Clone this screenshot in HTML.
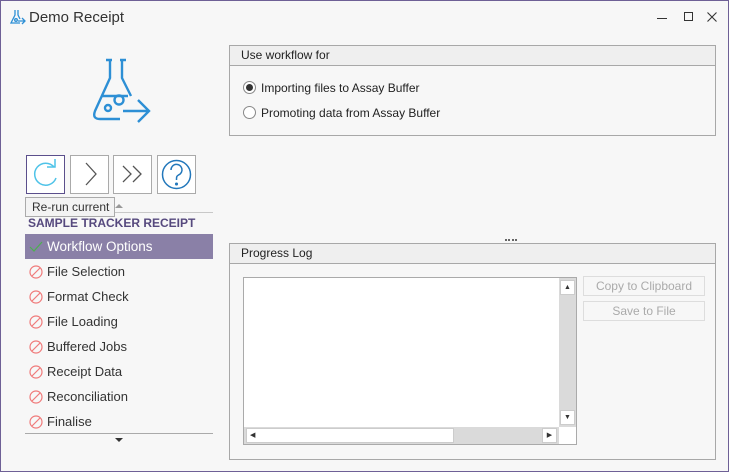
<!DOCTYPE html>
<html><head><style>
*{margin:0;padding:0;box-sizing:border-box}
body{width:729px;height:472px;overflow:hidden;background:#f7f7f7;font-family:"Liberation Sans",sans-serif;color:#333;position:relative}
.win{position:absolute;left:0;top:0;width:729px;height:472px;border:1px solid #6e6096}
.a{position:absolute}
.btn{position:absolute;top:155px;width:39px;height:39px;border:1px solid #aaa;background:#fff}
.item{position:absolute;left:25px;width:188px;height:25px;font-size:13px;line-height:25px;padding-left:22px;color:#333}
.item svg{position:absolute;left:4px;top:6px}
.grp{position:absolute;left:229px;width:487px;border:1px solid #a8a8a8;background:#f7f7f7}
.gh{height:20px;background:#efefef;border-bottom:1px solid #a8a8a8;font-size:12px;line-height:19px;padding-left:11px;color:#222}
.rad{position:absolute;left:13px;font-size:12px;color:#222}
.rad i{display:inline-block;width:13px;height:13px;border:1px solid #888;border-radius:50%;background:#fff;vertical-align:-2px;margin-right:5px;position:relative}
.gb{position:absolute;left:353px;width:122px;height:20px;border:1px solid #ddd;font-size:12px;color:#aaa;text-align:center;line-height:18px}
.sb{font-size:7px;text-align:center;line-height:13px;color:#333}
</style></head><body><div class="win"></div>
<svg class="a" style="left:9px;top:9px" width="17" height="17" viewBox="0 0 17 17" fill="none" stroke="#2d8fd5" stroke-width="1.3"><path d="M6 1v5L2 14h9M9 1v5l2 4"/><path d="M9 12h7M13 9l3 3-3 3"/><circle cx="7" cy="11" r="1.3"/></svg>
<div class="a" style="left:29px;top:9px;font-size:15px;color:#333">Demo Receipt</div>
<div class="a" style="left:657px;top:18px;width:10px;height:1px;background:#333"></div>
<div class="a" style="left:684px;top:12px;width:9px;height:9px;border:1px solid #333"></div>
<svg class="a" style="left:707px;top:12px" width="10" height="10" viewBox="0 0 10 10" stroke="#333" stroke-width="1.1"><path d="M0.5 0.5l9 9M9.5 0.5l-9 9"/></svg>
<svg class="a" style="left:90px;top:58px" width="64" height="66" viewBox="0 0 64 66" fill="none" stroke="#2d8fd5" stroke-width="2.4"><path d="M16 2h6M30 2h6"/><path d="M20 2v18L5 53q-3 8 5 8h20M32 2v18l9 18"/><path d="M12 38h26"/><circle cx="18" cy="50" r="3"/><circle cx="29" cy="42" r="4.5"/><path d="M33 53h26M48 42l11 11-11 11"/></svg>
<div class="btn" style="left:26px;border-color:#5b4f8c"><svg width="37" height="37" viewBox="0 0 37 37" fill="none" stroke="#4fc3e8" stroke-width="1.5"><path d="M27 11A11 11 0 1 0 29 22"/><path d="M20 11h8V3"/></svg></div>
<div class="btn" style="left:70px"><svg width="37" height="37" viewBox="0 0 37 37" fill="none" stroke="#555" stroke-width="1.3"><path d="M15 7l10 11-10 11"/></svg></div>
<div class="btn" style="left:113px"><svg width="37" height="37" viewBox="0 0 37 37" fill="none" stroke="#555" stroke-width="1.3"><path d="M9 10l8 8-8 8M19 10l8 8-8 8"/></svg></div>
<div class="btn" style="left:157px"><svg width="37" height="37" viewBox="0 0 37 37" fill="none" stroke="#2277bb" stroke-width="1.5"><circle cx="18.5" cy="18.5" r="14"/><path d="M13 14a5.5 5.5 0 1 1 7.5 5c-2 1-2 2-2 5"/><circle cx="18.5" cy="28" r=".8" fill="#2277bb"/></svg></div>
<div class="a" style="left:25px;top:212px;width:188px;height:1px;background:#c8c8c8"></div>
<div class="a" style="left:115px;top:200px;width:0;height:0;border:4px solid transparent;border-bottom-color:#999"></div>
<div class="a" style="left:25px;top:197px;width:90px;height:20px;background:#f3f3f3;border:1px solid #aaa;font-size:12px;line-height:18px;padding-left:6px;color:#333">Re-run current</div>
<div class="a" style="left:28px;top:216px;font-size:12px;font-weight:bold;color:#56497e">SAMPLE TRACKER RECEIPT</div>
<div class="item" style="top:234px;background:#8a80a7;color:#fff;font-size:13.5px"><svg width="14" height="14" viewBox="0 0 14 14" fill="none" stroke="#4caf50" stroke-width="1.2"><path d="M1 7l4 4 8-9"/></svg>Workflow Options</div>
<div class="item" style="top:259px"><svg width="14" height="14" viewBox="0 0 14 14" fill="none" stroke="#f07a7a" stroke-width="1.2"><circle cx="7" cy="7" r="6"/><path d="M3 11l8-8"/></svg>File Selection</div>
<div class="item" style="top:284px"><svg width="14" height="14" viewBox="0 0 14 14" fill="none" stroke="#f07a7a" stroke-width="1.2"><circle cx="7" cy="7" r="6"/><path d="M3 11l8-8"/></svg>Format Check</div>
<div class="item" style="top:309px"><svg width="14" height="14" viewBox="0 0 14 14" fill="none" stroke="#f07a7a" stroke-width="1.2"><circle cx="7" cy="7" r="6"/><path d="M3 11l8-8"/></svg>File Loading</div>
<div class="item" style="top:334px"><svg width="14" height="14" viewBox="0 0 14 14" fill="none" stroke="#f07a7a" stroke-width="1.2"><circle cx="7" cy="7" r="6"/><path d="M3 11l8-8"/></svg>Buffered Jobs</div>
<div class="item" style="top:359px"><svg width="14" height="14" viewBox="0 0 14 14" fill="none" stroke="#f07a7a" stroke-width="1.2"><circle cx="7" cy="7" r="6"/><path d="M3 11l8-8"/></svg>Receipt Data</div>
<div class="item" style="top:384px"><svg width="14" height="14" viewBox="0 0 14 14" fill="none" stroke="#f07a7a" stroke-width="1.2"><circle cx="7" cy="7" r="6"/><path d="M3 11l8-8"/></svg>Reconciliation</div>
<div class="item" style="top:409px"><svg width="14" height="14" viewBox="0 0 14 14" fill="none" stroke="#f07a7a" stroke-width="1.2"><circle cx="7" cy="7" r="6"/><path d="M3 11l8-8"/></svg>Finalise</div>
<div class="a" style="left:25px;top:433px;width:188px;height:1px;background:#aaa"></div>
<div class="a" style="left:115px;top:438px;width:0;height:0;border:4px solid transparent;border-top-color:#333"></div>
<div class="grp" style="top:45px;height:91px"><div class="gh">Use workflow for</div>
<div class="rad" style="top:35px"><i><b style="position:absolute;left:2px;top:2px;width:7px;height:7px;border-radius:50%;background:#333"></b></i>Importing files to Assay Buffer</div>
<div class="rad" style="top:60px"><i></i>Promoting data from Assay Buffer</div></div>
<div class="a" style="left:505px;top:239px;width:12px;height:2px;border-top:2px dotted #666"></div>
<div class="grp" style="top:243px;height:217px"><div class="gh">Progress Log</div>
<div class="a" style="left:13px;top:33px;width:334px;height:168px;border:1px solid #aaa;background:#fff">
<div class="a" style="left:315px;top:0;width:17px;height:149px;background:#dadada"><div class="a sb" style="left:1px;top:2px;width:15px;height:15px;background:#fff;border:1px solid #ccc">▲</div><div class="a sb" style="left:1px;top:132px;width:15px;height:15px;background:#fff;border:1px solid #ccc">▼</div></div>
<div class="a" style="left:0;top:149px;width:315px;height:17px;background:#dadada"><div class="a sb" style="left:2px;top:1px;width:208px;height:15px;background:#fff;border:1px solid #ccc;text-align:left;padding-left:3px">◀</div><div class="a sb" style="left:298px;top:1px;width:15px;height:15px;background:#fff;border:1px solid #ccc">▶</div></div></div>
<div class="gb" style="top:32px">Copy to Clipboard</div>
<div class="gb" style="top:57px">Save to File</div></div>
</body></html>
